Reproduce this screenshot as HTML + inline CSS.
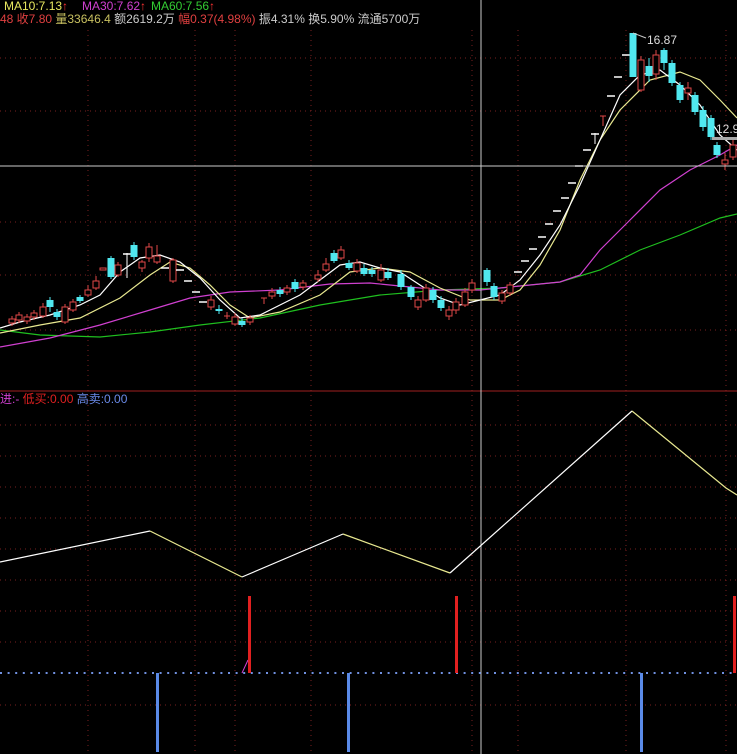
<!DOCTYPE html><html><head><meta charset="utf-8"><style>
html,body{margin:0;padding:0;background:#000;width:737px;height:754px;overflow:hidden}
svg{position:absolute;left:0;top:0}
.t{position:absolute;font:12px "Liberation Sans","Noto Sans CJK SC",sans-serif;white-space:nowrap;line-height:13px}
</style></head><body>
<svg width="737" height="754" viewBox="0 0 737 754">
<g stroke="#7a2020" stroke-dasharray="1 4" stroke-width="1">
<line x1="0" y1="58" x2="737" y2="58"/><line x1="0" y1="111" x2="737" y2="111"/><line x1="0" y1="222" x2="737" y2="222"/><line x1="0" y1="275" x2="737" y2="275"/><line x1="0" y1="330" x2="737" y2="330"/>
<line x1="0" y1="425" x2="737" y2="425"/><line x1="0" y1="456" x2="737" y2="456"/><line x1="0" y1="487" x2="737" y2="487"/><line x1="0" y1="518" x2="737" y2="518"/><line x1="0" y1="549" x2="737" y2="549"/><line x1="0" y1="580" x2="737" y2="580"/><line x1="0" y1="611" x2="737" y2="611"/><line x1="0" y1="642" x2="737" y2="642"/><line x1="0" y1="705" x2="737" y2="705"/>
<g id="v"><line x1="88" y1="30" x2="88" y2="754"/><line x1="195" y1="30" x2="195" y2="754"/><line x1="235" y1="30" x2="235" y2="754"/><line x1="311" y1="30" x2="311" y2="754"/><line x1="472" y1="30" x2="472" y2="754"/><line x1="518" y1="30" x2="518" y2="754"/><line x1="626" y1="30" x2="626" y2="754"/><line x1="726" y1="30" x2="726" y2="754"/></g>
</g>
<line x1="0" y1="391" x2="737" y2="391" stroke="#a02020" stroke-width="1"/>
<g fill="none" stroke-width="1.2">
<polyline stroke="#1fbf1f" points="0,330 40,335 100,337 150,332 200,325 260,318 320,305 380,295 440,290 500,288 560,282 600,270 640,250 680,235 720,218 737,214"/>
<polyline stroke="#d040d0" points="0,347 50,338 100,325 150,310 190,298 230,292 280,290 330,284 370,283 400,286 440,290 480,290 520,286 560,282 580,275 600,250 630,220 660,190 690,170 720,155 737,145"/>
<polyline stroke="#e8e890" points="0,333 40,325 80,318 120,298 150,275 170,262 190,268 210,285 230,305 250,318 280,312 320,295 350,272 380,268 410,272 440,288 470,300 500,300 520,290 540,265 560,230 580,180 600,140 620,110 650,80 680,72 700,80 720,100 737,118"/>
<polyline stroke="#fff" points="0,328 20,322 50,315 80,305 100,295 120,272 140,258 160,255 180,262 200,278 220,300 240,318 260,315 280,305 300,295 320,280 340,265 360,262 380,268 400,272 420,285 440,298 460,305 480,300 500,295 520,280 540,255 560,225 580,185 600,140 620,95 640,75 660,70 680,85 700,105 720,135 737,150"/>
</g>
<g id="c"></g>
<rect x="712" y="137" width="25" height="3" fill="#aaa"/>
<text x="716" y="133" fill="#ddd" font-size="12" font-family="Liberation Sans">12.9</text>
<polyline points="633,33 646,38" stroke="#ccc" fill="none"/>
<text x="647" y="44" fill="#ddd" font-size="12" font-family="Liberation Sans">16.87</text>
<line x1="0" y1="166" x2="737" y2="166" stroke="#ccc" stroke-width="1"/>
<line x1="481" y1="0" x2="481" y2="754" stroke="#ccc" stroke-width="1"/>
<g fill="none" stroke-width="1.2">
<polyline stroke="#fff" points="0,562 150,531"/><polyline stroke="#e8e890" points="150,531 242,577"/><polyline stroke="#fff" points="242,577 343,534"/><polyline stroke="#e8e890" points="343,534 450,573"/><polyline stroke="#fff" points="450,573 632,411"/><polyline stroke="#e8e890" points="632,411 726,488 737,495"/>
</g>
<line x1="0" y1="673" x2="737" y2="673" stroke="#7090e0" stroke-dasharray="2 5.6" stroke-width="2"/>
<line x1="242" y1="673" x2="248" y2="660" stroke="#d040d0"/>
<g fill="#e02020"><rect x="248" y="596" width="3" height="77"/><rect x="455" y="596" width="3" height="77"/><rect x="733" y="596" width="3" height="77"/></g>
<g fill="#5a8ae8"><rect x="156" y="673" width="3" height="79"/><rect x="347" y="673" width="3" height="79"/><rect x="640" y="673" width="3" height="79"/></g>
</svg>
<div class="t" style="left:4px;top:0"><span style="color:#e8e860">MA10:7.13</span><span style="color:#f33">↑</span></div>
<div class="t" style="left:82px;top:0"><span style="color:#d040d0">MA30:7.62</span><span style="color:#f33">↑</span></div>
<div class="t" style="left:151px;top:0"><span style="color:#3c3">MA60:7.56</span><span style="color:#f33">↑</span></div>
<div class="t" style="left:0;top:13px"><span style="color:#e04040">48 收7.80 </span><span style="color:#c8c060">量33646.4 </span><span style="color:#ccc">额2619.2万 </span><span style="color:#e04040">幅0.37(4.98%) </span><span style="color:#ccc">振4.31% 换5.90% 流通5700万</span></div>
<div class="t" style="left:0;top:393px"><span style="color:#d040d0">进:- </span><span style="color:#e02020">低买:0.00 </span><span style="color:#6a8ae8">高卖:0.00</span></div>
<script>
var C=[
['r',12,319,323,316,326],['r',19,315,320,312,323],['r',27,317,321,314,324],['r',34,313,317,310,320],['r',43,307,316,303,318],['c',50,300,307,297,312],['c',57,312,317,309,320],['r',65,307,322,304,324],['r',73,302,310,299,312],['c',80,297,301,295,303],['r',88,290,295,285,297],['r',96,281,288,276,290],['r',103,268,270,268,270],['c',111,258,277,256,279],['r',118,265,275,262,277],['w',127,254,254,253,278],['c',134,245,257,242,260],['r',142,262,268,260,272],['r',149,247,258,243,262],['r',157,256,262,245,264],['w',165,268,268,268,268],['r',173,260,281,258,283],['w',180,270,270,270,270],['w',188,281,281,281,281],['w',196,292,292,292,292],['w',203,302,302,302,302],['r',211,300,307,296,310],['c',219,309,311,305,314],['r',227,316,317,312,319],['r',235,317,324,313,326],['c',242,321,325,318,327],['r',250,318,322,315,325],['r',264,298,299,298,304],['r',272,292,296,288,299],['c',280,290,294,287,297],['r',287,288,292,285,295],['c',295,282,289,279,292],['r',303,283,287,280,290],['r',318,275,279,270,282],['r',326,264,270,258,272],['c',334,253,261,250,263],['r',341,250,258,246,260],['c',349,263,268,260,270],['r',357,263,271,259,273],['c',364,268,274,264,276],['c',372,270,274,267,277],['r',381,270,280,264,282],['c',388,272,278,268,280],['c',401,274,287,270,290],['c',411,287,297,285,300],['r',418,300,307,296,310],['r',426,288,300,284,302],['c',433,290,300,287,303],['c',441,300,308,296,311],['r',449,310,316,306,320],['r',456,302,310,298,314],['r',465,292,305,288,307],['r',472,283,290,279,293],['c',487,270,282,268,286],['c',494,286,297,283,300],['r',502,293,301,290,304],['r',510,285,293,282,296],
['w',518,272,272,272,272],['w',525,261,261,261,261],['w',533,249,249,249,249],['w',542,237,237,237,237],['w',549,224,224,224,224],['w',557,211,211,211,211],['w',565,198,198,198,198],['w',572,183,183,183,183],['w',579,166,166,166,166],['w',587,150,150,150,150],['w',595,134,134,133,144],['r',603,116,116,116,126],['w',611,96,96,96,96],['w',618,77,77,77,77],['w',626,55,55,55,55],
['c',633,33,77,33,77],['r',641,60,90,56,92],['c',649,66,76,58,82],['r',656,55,74,50,80],['c',664,50,63,48,70],['c',672,63,83,60,86],['c',680,85,100,82,103],['r',688,88,93,82,100],['c',695,95,112,92,115],['c',703,110,127,106,131],['c',711,118,137,115,140],['c',717,145,155,142,158],['r',725,160,164,153,170],['r',733,145,157,140,160]];
var s='';
C.forEach(function(a){var t=a[0],x=a[1],o=a[2],c=a[3],h=a[4],l=a[5];
if(t=='w'){s+='<line x1="'+(x-4)+'" y1="'+o+'" x2="'+(x+4)+'" y2="'+o+'" stroke="#fff" stroke-width="1.5"/>';if(l>o+1)s+='<line x1="'+x+'" y1="'+h+'" x2="'+x+'" y2="'+l+'" stroke="#fff"/>';return;}
var col=t=='r'?'#e04848':'#50e8f0';
s+='<line x1="'+x+'" y1="'+h+'" x2="'+x+'" y2="'+l+'" stroke="'+col+'"/>';
var hgt=Math.max(c-o,1.5);
if(t=='r'){if(c-o<2)s+='<line x1="'+(x-3)+'" y1="'+o+'" x2="'+(x+3)+'" y2="'+o+'" stroke="'+col+'"/>';else s+='<rect x="'+(x-3)+'" y="'+o+'" width="6" height="'+hgt+'" fill="#000" stroke="'+col+'"/>';}
else s+='<rect x="'+(x-3.5)+'" y="'+o+'" width="7" height="'+hgt+'" fill="'+col+'"/>';});
document.getElementById('c').innerHTML=s;
</script>
</body></html>
